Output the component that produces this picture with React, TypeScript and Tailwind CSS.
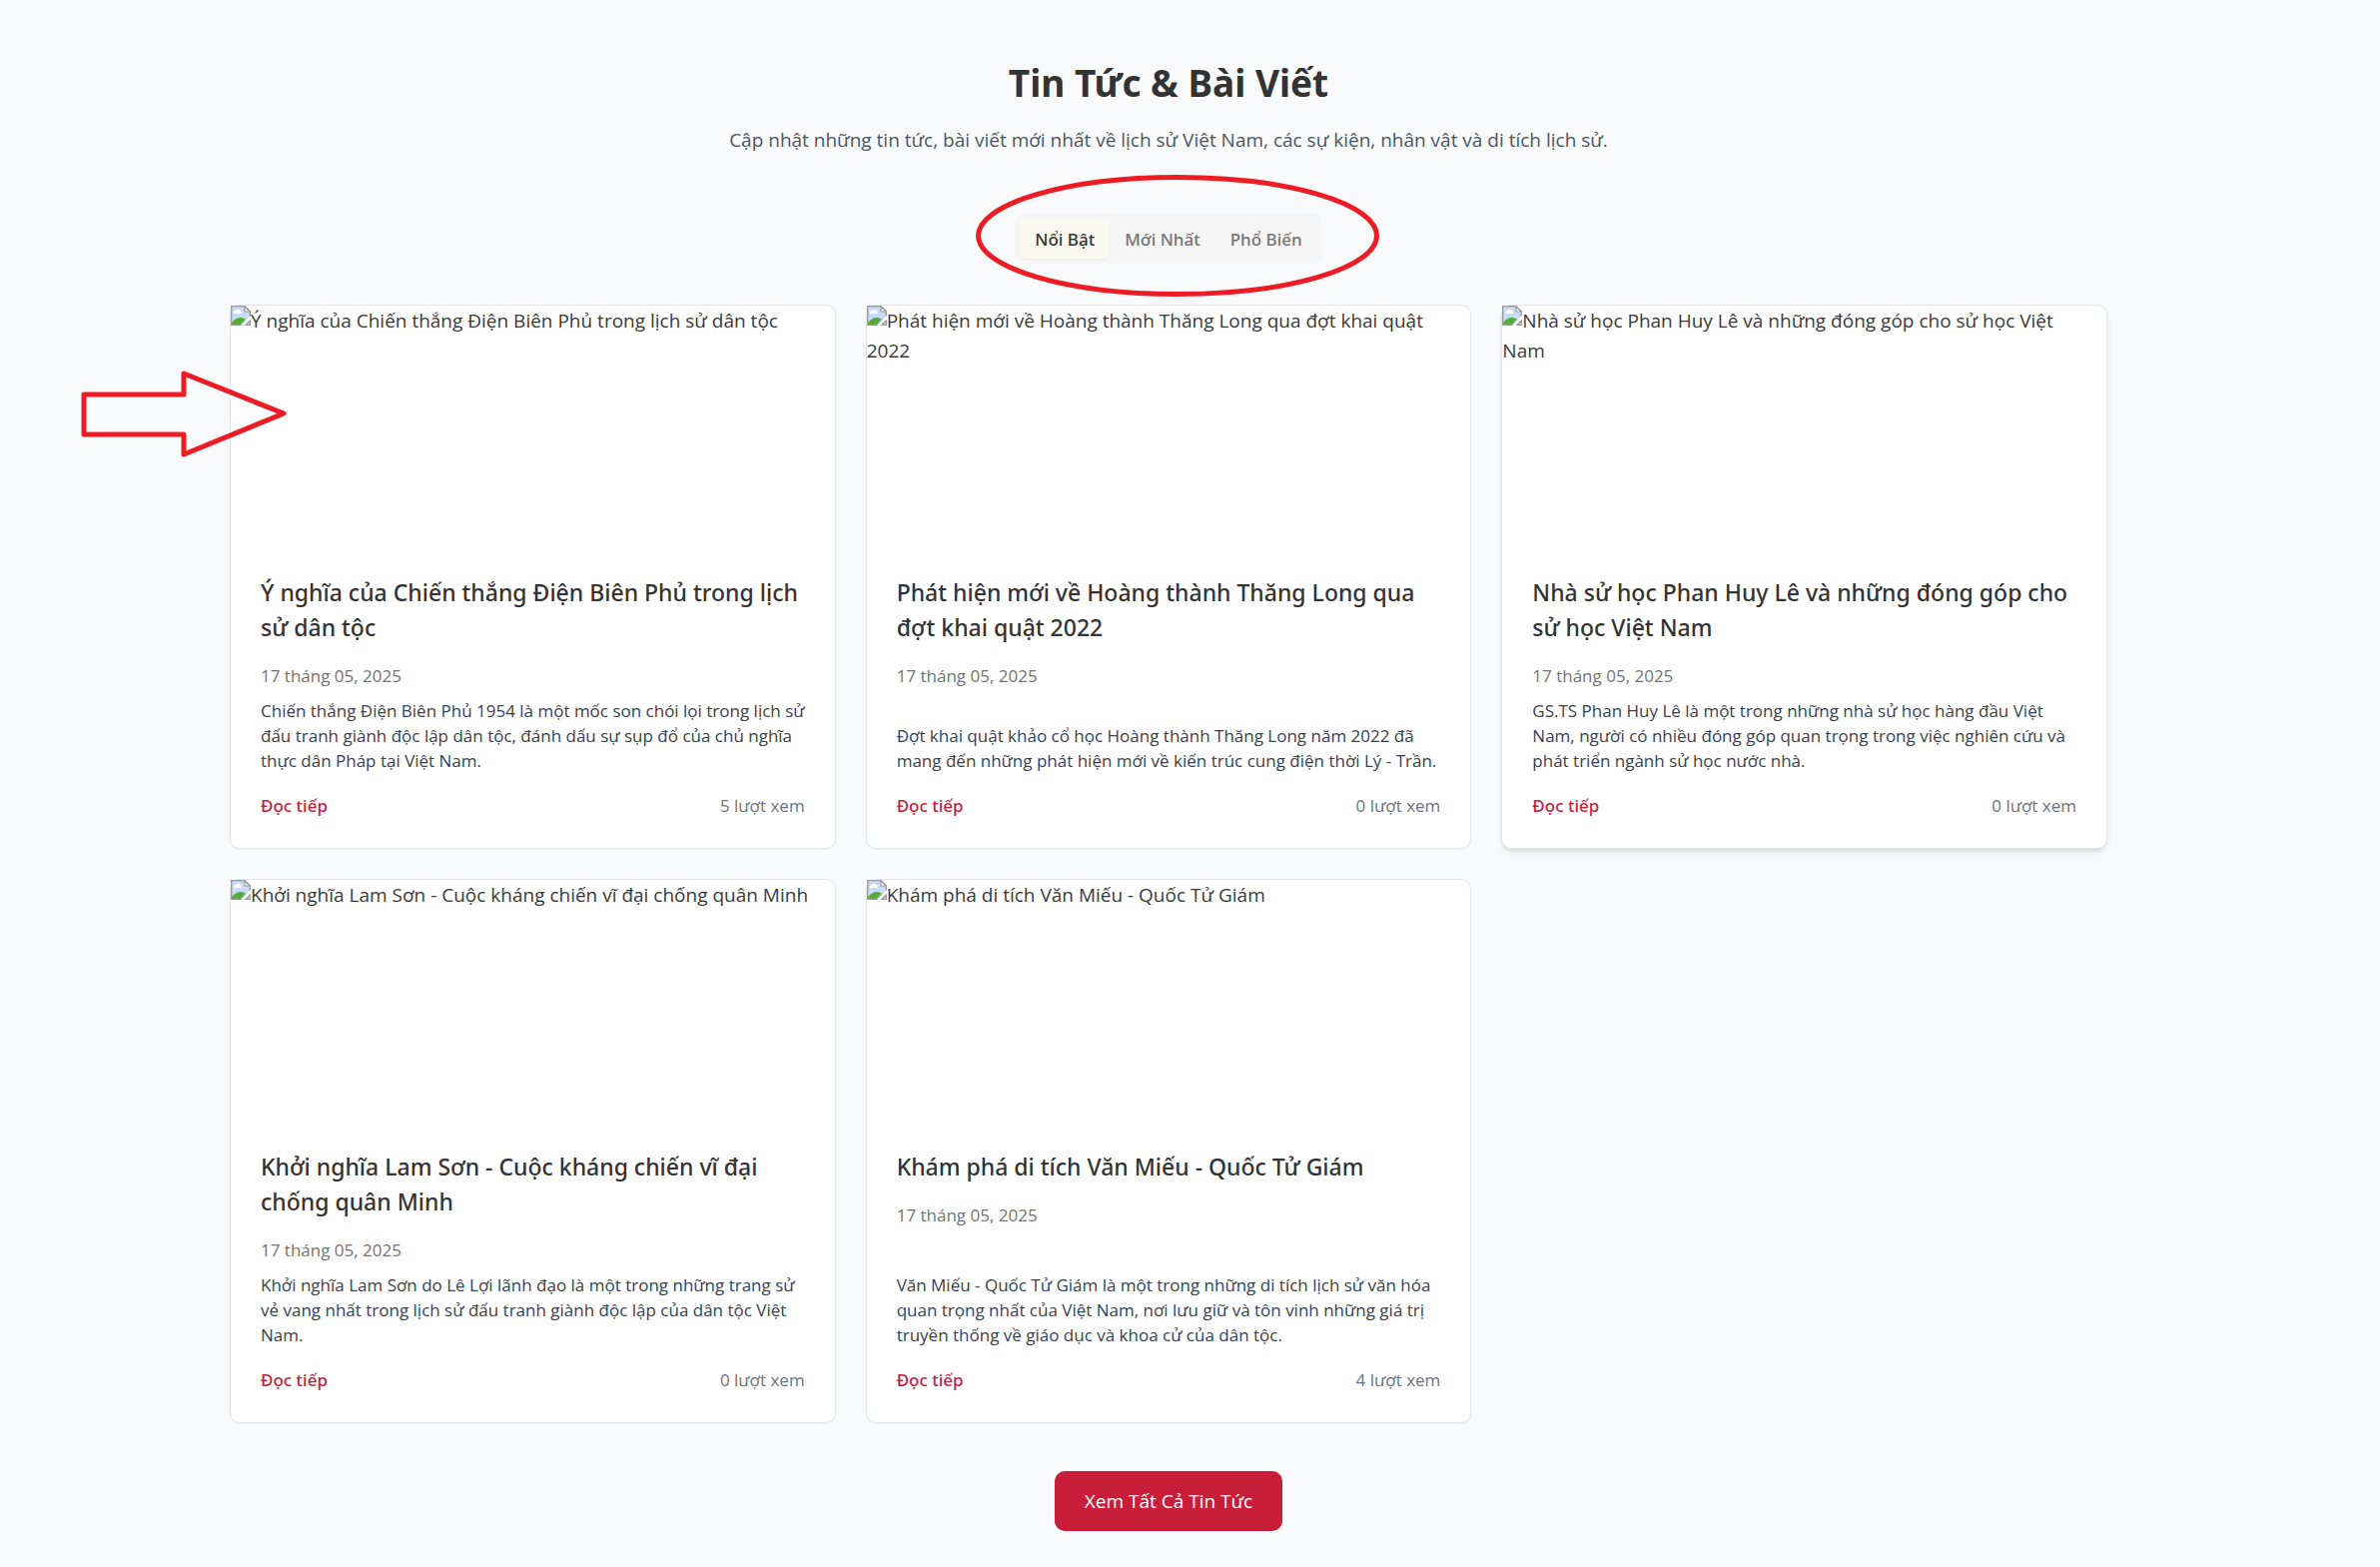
type Article = {
  title: string;
  date: string;
  excerpt: string;
  views: number;
  raised?: boolean;
};

const articles: Article[] = [
  {
    title: "Ý nghĩa của Chiến thắng Điện Biên Phủ trong lịch sử dân tộc",
    date: "17 tháng 05, 2025",
    excerpt:
      "Chiến thắng Điện Biên Phủ 1954 là một mốc son chói lọi trong lịch sử đấu tranh giành độc lập dân tộc, đánh dấu sự sụp đổ của chủ nghĩa thực dân Pháp tại Việt Nam.",
    views: 5,
  },
  {
    title: "Phát hiện mới về Hoàng thành Thăng Long qua đợt khai quật 2022",
    date: "17 tháng 05, 2025",
    excerpt:
      "Đợt khai quật khảo cổ học Hoàng thành Thăng Long năm 2022 đã mang đến những phát hiện mới về kiến trúc cung điện thời Lý - Trần.",
    views: 0,
  },
  {
    title: "Nhà sử học Phan Huy Lê và những đóng góp cho sử học Việt Nam",
    date: "17 tháng 05, 2025",
    excerpt:
      "GS.TS Phan Huy Lê là một trong những nhà sử học hàng đầu Việt Nam, người có nhiều đóng góp quan trọng trong việc nghiên cứu và phát triển ngành sử học nước nhà.",
    views: 0,
    raised: true,
  },
  {
    title: "Khởi nghĩa Lam Sơn - Cuộc kháng chiến vĩ đại chống quân Minh",
    date: "17 tháng 05, 2025",
    excerpt:
      "Khởi nghĩa Lam Sơn do Lê Lợi lãnh đạo là một trong những trang sử vẻ vang nhất trong lịch sử đấu tranh giành độc lập của dân tộc Việt Nam.",
    views: 0,
  },
  {
    title: "Khám phá di tích Văn Miếu - Quốc Tử Giám",
    date: "17 tháng 05, 2025",
    excerpt:
      "Văn Miếu - Quốc Tử Giám là một trong những di tích lịch sử văn hóa quan trọng nhất của Việt Nam, nơi lưu giữ và tôn vinh những giá trị truyền thống về giáo dục và khoa cử của dân tộc.",
    views: 4,
  },
];

const tabs = ["Nổi Bật", "Mới Nhất", "Phổ Biến"];

function BrokenImage() {
  return (
    <svg
      className="inline-block h-5 w-5 align-top"
      viewBox="0 0 20 20"
      aria-hidden="true"
    >
      <path d="M0.5 0.5H14L19.5 6V19.5H0.5Z" fill="#c9dbf8" />
      <path d="M3 8a2.2 2.2 0 0 1 2-3 2.800 2.800 0 0 1 4.500 0 2 2 0 0 1 1 3Z" fill="#fff" />
      <path d="M1 19v-2C4 13 8 11.500 11 12L15 13.500 10 19Z" fill="#55ab38" />
      <path d="M10.500 20 20 10V14L14.500 20Z" fill="#fff" />
      <path d="M14 0.700V6H19.300Z" fill="#fff" stroke="#9a9a9a" strokeWidth="1.200" />
      <path
        d="M10.500 19.300H0.700V0.700H14L19.300 6V10.500M19.300 15V19.300H15Z"
        fill="none"
        stroke="#9a9a9a"
        strokeWidth="1.300"
      />
    </svg>
  );
}

function PointerArrow() {
  return (
    <svg
      className="pointer-events-none absolute top-16 -left-38 z-10 h-22 w-52"
      viewBox="0 0 208 88"
      fill="none"
      stroke="#ed1c24"
      strokeWidth="5"
      strokeLinejoin="round"
      aria-hidden="true"
    >
      <path d="M5 25H105V4L205 44L105 85V65H5Z" />
    </svg>
  );
}

function ArticleCard({ article, pointed }: { article: Article; pointed: boolean }) {
  return (
    <article
      className={
        article.raised
          ? "relative flex flex-col rounded-[10px] border border-[#e3e5e8] bg-white shadow-md"
          : "relative flex flex-col rounded-[10px] border border-[#e3e5e8] bg-white shadow-xs"
      }
    >
      {pointed && <PointerArrow />}
      <div className="h-60 pr-3 text-[19px] leading-[30px] text-[#3a3a3a]">
        <BrokenImage />
        {article.title}
      </div>
      <div className="flex grow flex-col p-[30px]">
        <h3 className="font-['Noto_Sans',sans-serif] text-[23px] leading-[35px] font-medium text-[#333333]">
          {article.title}
        </h3>
        <p className="mt-[18px] text-[17px] leading-[25px] text-[#737373]">{article.date}</p>
        <p className="-mr-2 mt-auto pt-[10px] text-[17px] leading-[25px] text-[#374151]">
          {article.excerpt}
        </p>
        <div className="mt-5 flex items-center justify-between text-[17px] leading-[25px]">
          <a href="#doc-tiep" className="font-['Noto_Sans',sans-serif] font-medium text-[#c81e3a]">
            Đọc tiếp
          </a>
          <span className="text-[#6b7280]">{article.views} lượt xem</span>
        </div>
      </div>
    </article>
  );
}

export default function App() {
  return (
    <div className="min-h-screen bg-[#f9fafc] pt-[60px] pb-9 pr-[43px] font-['Open_Sans',sans-serif]">
      <section className="mx-auto max-w-[1920px] px-5">
        <header className="text-center">
          <h2 className="font-['Noto_Sans',sans-serif] text-[37px] leading-[45px] font-bold text-[#333333]">
            Tin Tức &amp; Bài Viết
          </h2>
          <p className="mt-5 text-[19px] leading-[30px] text-[#4b5563]">
            Cập nhật những tin tức, bài viết mới nhất về lịch sử Việt Nam, các sự kiện, nhân vật và di
            tích lịch sử.
          </p>
        </header>

        <div className="mt-[59px] flex justify-center">
          <div className="relative">
            <div role="tablist" className="flex rounded-[10px] bg-[#f5f5f5] p-[5px]">
              {tabs.map((tab, i) => (
                <button
                  key={tab}
                  type="button"
                  role="tab"
                  aria-selected={i === 0}
                  className={
                    i === 0
                      ? "rounded-[7px] bg-[#fbf8ef] px-[15px] pt-2 pb-1.5 font-['Noto_Sans',sans-serif] text-[17px] leading-[26px] font-medium text-[#333333] shadow-xs"
                      : "rounded-[7px] px-[15px] pt-2 pb-1.5 font-['Noto_Sans',sans-serif] text-[17px] leading-[26px] font-medium text-[#737373]"
                  }
                >
                  {tab}
                </button>
              ))}
            </div>
            <svg
              className="pointer-events-none absolute -top-10 -left-10 z-10 h-[124px] w-[406px]"
              viewBox="0 0 406 124"
              fill="none"
              stroke="#ed1c24"
              strokeWidth="5"
              aria-hidden="true"
            >
              <ellipse cx="203" cy="62" rx="199.500" ry="58.500" />
            </svg>
          </div>
        </div>

        <div className="mt-[41px] grid grid-cols-3 gap-[30px]">
          {articles.map((article, i) => (
            <ArticleCard key={article.title} article={article} pointed={i === 0} />
          ))}
        </div>

        <div className="mt-12 flex justify-center">
          <button
            type="button"
            className="rounded-[10px] bg-[#c81e3a] px-[30px] py-[15px] text-[19px] leading-[30px] text-white"
          >
            Xem Tất Cả Tin Tức
          </button>
        </div>
      </section>
    </div>
  );
}
